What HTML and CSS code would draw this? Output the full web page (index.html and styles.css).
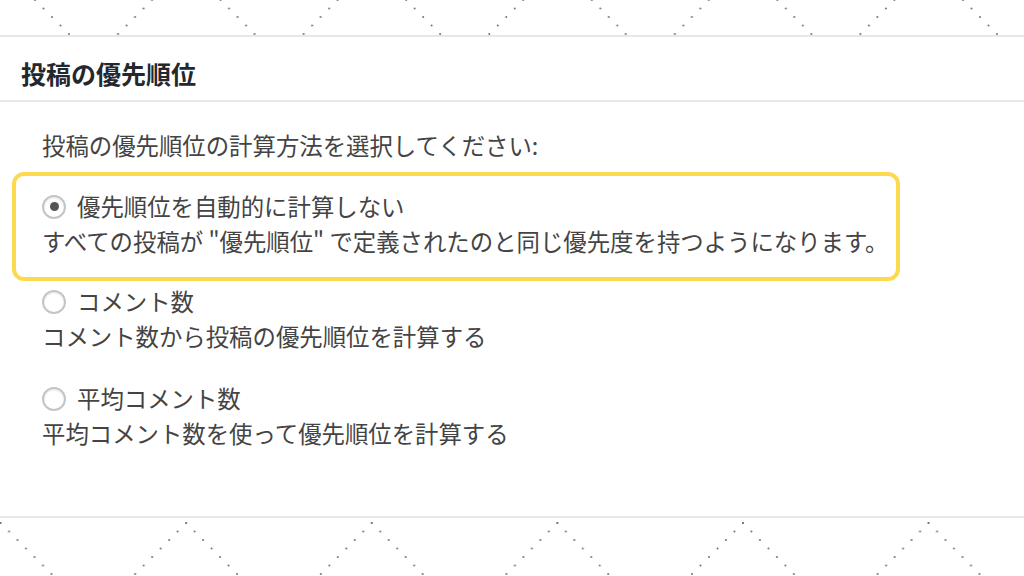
FILE: index.html
```html
<!DOCTYPE html>
<html lang="ja">
<head>
    <meta charset="UTF-8">
    <meta name="viewport" content="width=device-width, initial-scale=1.0">
    <title>投稿の優先順位</title>
    <link rel="stylesheet" href="styles.css">
</head>
<body>
    <div class="band band-top">
        <svg width="100%" height="35">
            <defs>
                <pattern id="zigTop" patternUnits="userSpaceOnUse" width="185.6" height="35">
                    <line x1="35" y1="0" x2="71" y2="36" class="dots"/>
                    <line x1="152" y1="0" x2="116" y2="36" class="dots"/>
                </pattern>
            </defs>
            <rect width="100%" height="35" fill="url(#zigTop)"/>
        </svg>
    </div>

    <div class="panel">
        <h2 class="panel-title">投稿の優先順位</h2>
        <div class="panel-body">
            <p class="intro">投稿の優先順位の計算方法を選択してください:</p>

            <div class="option highlight">
                <label class="option-label"><input type="radio" name="priority" checked> 優先順位を自動的に計算しない</label>
                <div class="option-desc">すべての投稿が "優先順位" で定義されたのと同じ優先度を持つようになります。</div>
            </div>

            <div class="option second">
                <label class="option-label"><input type="radio" name="priority"> コメント数</label>
                <div class="option-desc">コメント数から投稿の優先順位を計算する</div>
            </div>

            <div class="option third">
                <label class="option-label"><input type="radio" name="priority"> 平均コメント数</label>
                <div class="option-desc">平均コメント数を使って優先順位を計算する</div>
            </div>
        </div>
    </div>

    <div class="band band-bottom">
        <svg width="100%" height="58">
            <defs>
                <pattern id="zigBottom" patternUnits="userSpaceOnUse" x="-92.25" width="185.6" height="58">
                    <line x1="92.8" y1="5" x2="152.8" y2="65" class="dots"/>
                    <line x1="92.8" y1="5" x2="32.8" y2="65" class="dots"/>
                </pattern>
            </defs>
            <rect width="100%" height="58" fill="url(#zigBottom)"/>
        </svg>
    </div>
</body>
</html>
```

FILE: styles.css
```css
html, body {
    margin: 0;
    height: 100%;
}
body {
    font-family: "Noto Sans CJK JP", "Noto Sans", sans-serif;
    background-color: #fff;
    color: #444;
    display: flex;
    flex-direction: column;
    overflow: hidden;
}
.band {
    flex: none;
    line-height: 0;
}
.band svg {
    display: block;
}
.band-top {
    height: 35px;
}
.band-bottom {
    height: 58px;
}
.dots {
    stroke: #6f6f6f;
    stroke-width: 2;
    stroke-linecap: round;
    stroke-dasharray: 0 12;
}
.panel {
    flex: 1;
    border-top: 2px solid #e8e8e8;
    border-bottom: 2px solid #e8e8e8;
    background-color: #fff;
}
.panel-title {
    margin: 0;
    height: 65px;
    box-sizing: border-box;
    padding: 19px 0 0 21px;
    font-size: 25px;
    line-height: 34px;
    font-weight: bold;
    color: #23282d;
    border-bottom: 2px solid #e8e8e8;
}
.panel-body {
    padding: 26px 0 0 42px;
    font-size: 23.4px;
    line-height: 35px;
}
.intro {
    margin: 0 0 9px;
}
.option-label {
    display: flex;
    align-items: center;
}
.option input {
    appearance: none;
    -webkit-appearance: none;
    margin: 0 11px 0 0;
    width: 24px;
    height: 24px;
    border: 2px solid #c2c6ca;
    border-radius: 50%;
    box-sizing: border-box;
    background-color: #fff;
    box-shadow: inset 0 1px 2px rgba(0,0,0,0.1);
    display: flex;
    align-items: center;
    justify-content: center;
}
.option input:checked::before {
    content: "";
    width: 9px;
    height: 9px;
    border-radius: 50%;
    background-color: #555;
}
.highlight {
    display: inline-block;
    margin-left: -30px;
    padding: 13px 8px 18px 26px;
    border: 4px solid #fdd94f;
    border-radius: 12px;
}
.second {
    margin-top: 3px;
}
.third {
    margin-top: 27px;
}
```
